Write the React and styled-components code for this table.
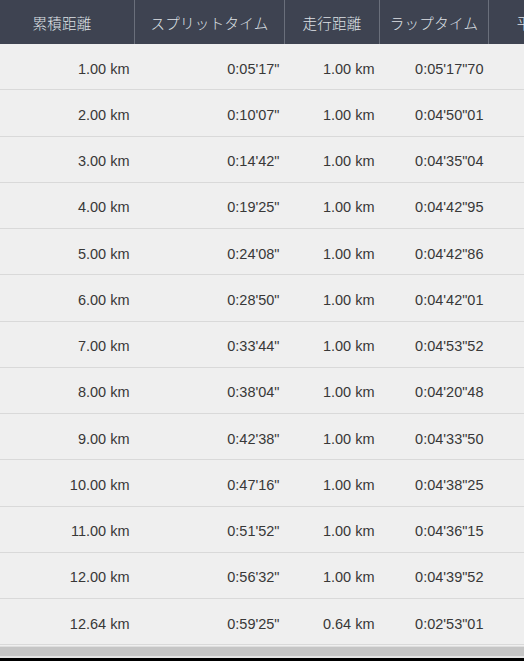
import React from "react";
import styled, { createGlobalStyle } from "styled-components";

const laps = [
  ["1.00 km", "0:05'17\"", "1.00 km", "0:05'17\"70"],
  ["2.00 km", "0:10'07\"", "1.00 km", "0:04'50\"01"],
  ["3.00 km", "0:14'42\"", "1.00 km", "0:04'35\"04"],
  ["4.00 km", "0:19'25\"", "1.00 km", "0:04'42\"95"],
  ["5.00 km", "0:24'08\"", "1.00 km", "0:04'42\"86"],
  ["6.00 km", "0:28'50\"", "1.00 km", "0:04'42\"01"],
  ["7.00 km", "0:33'44\"", "1.00 km", "0:04'53\"52"],
  ["8.00 km", "0:38'04\"", "1.00 km", "0:04'20\"48"],
  ["9.00 km", "0:42'38\"", "1.00 km", "0:04'33\"50"],
  ["10.00 km", "0:47'16\"", "1.00 km", "0:04'38\"25"],
  ["11.00 km", "0:51'52\"", "1.00 km", "0:04'36\"15"],
  ["12.00 km", "0:56'32\"", "1.00 km", "0:04'39\"52"],
  ["12.64 km", "0:59'25\"", "0.64 km", "0:02'53\"01"],
];

const headers = ["累積距離", "スプリットタイム", "走行距離", "ラップタイム", "平均ペース"];

function App() {
  return (
    <>
      <GlobalStyle />
      <Screen>
        <ScrollArea>
          <Table>
            <HeaderRow>
              {headers.map((h, i) => (
                <HeaderCell key={h} first={i === 0}>
                  {h}
                </HeaderCell>
              ))}
            </HeaderRow>
            {laps.map((row) => (
              <Row key={row[0]}>
                {row.map((v, i) => (
                  <Cell key={i}>{v}</Cell>
                ))}
                <Cell />
              </Row>
            ))}
          </Table>
        </ScrollArea>
        <ScrollTrack />
        <Bezel />
      </Screen>
    </>
  );
}

const GlobalStyle = createGlobalStyle`
  html, body {
    margin: 0;
    padding: 0;
    background: #000;
  }
`;

const Screen = styled.div`
  width: 524px;
  height: 661px;
  display: flex;
  flex-direction: column;
  overflow: hidden;
  background: #efefef;
  font-family: "Liberation Sans", "Noto Sans CJK JP", sans-serif;
`;

const ScrollArea = styled.div`
  overflow: hidden;
`;

const Table = styled.div`
  margin-left: -10px;
  width: max-content;
`;

const columns = "144px 150px 95px 109px 130px";

const HeaderRow = styled.div`
  display: grid;
  grid-template-columns: ${columns};
  height: 44px;
  background: #3e4351;
`;

const HeaderCell = styled.div`
  display: flex;
  align-items: center;
  justify-content: center;
  border-left: ${(p) => (p.first ? "none" : "1px solid #6a6f7b")};
  color: #dfe1e6;
  font-family: "Noto Sans CJK JP", sans-serif;
  font-size: 14.5px;
  font-weight: 300;
  letter-spacing: 0.3px;
`;

const Row = styled.div`
  display: grid;
  grid-template-columns: ${columns};
  height: 46.25px;
  box-sizing: border-box;
  border-bottom: 1px solid #d9d9d9;
  background: #efefef;
`;

const Cell = styled.div`
  display: flex;
  align-items: center;
  justify-content: flex-end;
  padding-right: 4.5px;
  padding-top: 4px;
  color: #383838;
  font-size: 14.5px;
`;

const ScrollTrack = styled.div`
  height: 9px;
  margin-top: 1px;
  background: #c5c5c5;
  border-top: 1px solid #dedede;
  border-bottom: 2px solid #e4e4e4;
`;

const Bezel = styled.div`
  flex: 1;
  background: #000;
`;

export default App;
